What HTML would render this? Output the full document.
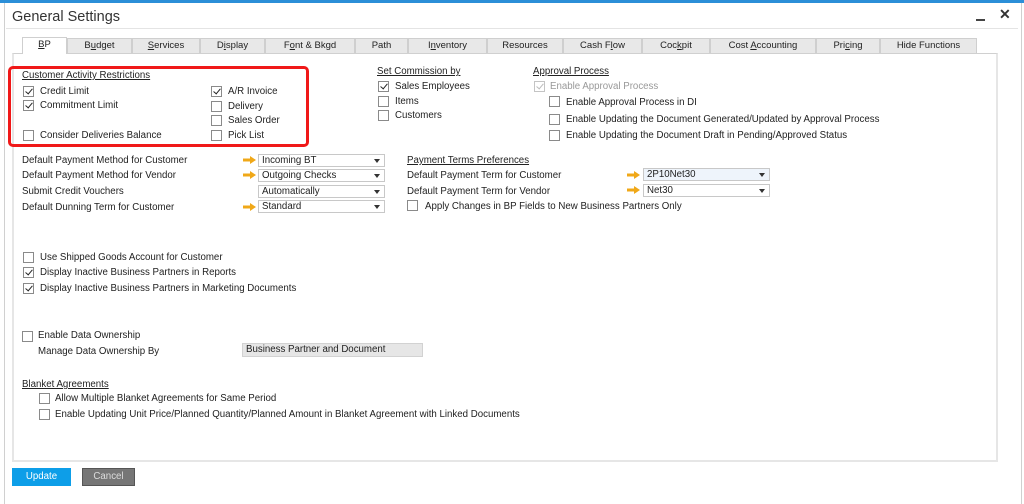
<!DOCTYPE html>
<html><head><meta charset="utf-8"><style>
*{margin:0;padding:0;box-sizing:border-box}
body{width:1024px;height:504px;background:#fff;font-family:"Liberation Sans",sans-serif;font-size:9.7px;color:#222;position:relative;overflow:hidden}
.a{position:absolute;white-space:nowrap}
.cb{position:absolute;width:11px;height:11px;border:1px solid #8a8a8a;background:#fff}
.cb.c::after{content:"";position:absolute;left:3px;top:0px;width:3px;height:6px;border:solid #222;border-width:0 1.5px 1.5px 0;transform:rotate(40deg)}
.cb.d{border-color:#c4c4c4}.cb.d::after{border-color:#bbb}
.u{text-decoration:underline}
.dd{position:absolute;height:13px;border:1px solid #c8c8c8;background:#fff;padding-left:3px;line-height:11px}
.dd::after{content:"";position:absolute;right:4px;top:4px;border:3.5px solid transparent;border-top:4px solid #333}
.arr{position:absolute;width:13px;height:8px}
.tab{position:absolute;top:38px;height:15px;background:#e8e8e8;border:1px solid #cfcfcf;border-bottom:none;text-align:center;line-height:14px;font-size:9.5px}
</style></head><body>
<div class="a" style="left:0;top:0;width:1024px;height:3px;background:#2b8fd8"></div>
<div class="a" style="left:4px;top:3px;width:1px;height:501px;background:#d0d0d0"></div>
<div class="a" style="left:1021px;top:3px;width:1px;height:501px;background:#d0d0d0"></div>
<div class="a" style="left:12px;top:9px;font-size:14.5px;color:#333">General Settings</div>
<div class="a" style="left:6px;top:28px;width:1012px;height:1px;background:#e4e4e4"></div>
<div class="a" style="left:976px;top:19px;width:9px;height:2px;background:#444"></div>
<div class="a" style="left:999px;top:6px;font-size:14px;font-weight:bold;color:#333">✕</div>

<div class="a" style="left:12px;top:53px;width:986px;height:409px;border:2px solid #e6e6e6;border-top:1px solid #d0d0d0"></div>
<div class="tab" style="left:22px;width:45px;top:37px;height:17px;background:#fff"><span class="u">B</span>P</div>
<div class="tab" style="left:67px;width:65px">B<span class="u">u</span>dget</div>
<div class="tab" style="left:132px;width:68px"><span class="u">S</span>ervices</div>
<div class="tab" style="left:200px;width:65px">D<span class="u">i</span>splay</div>
<div class="tab" style="left:265px;width:90px">F<span class="u">o</span>nt &amp; Bkgd</div>
<div class="tab" style="left:355px;width:53px">Path</div>
<div class="tab" style="left:408px;width:79px">I<span class="u">n</span>ventory</div>
<div class="tab" style="left:487px;width:76px">Resources</div>
<div class="tab" style="left:563px;width:79px">Cash F<span class="u">l</span>ow</div>
<div class="tab" style="left:642px;width:68px">Coc<span class="u">k</span>pit</div>
<div class="tab" style="left:710px;width:106px">Cost <span class="u">A</span>ccounting</div>
<div class="tab" style="left:816px;width:64px">Pri<span class="u">c</span>ing</div>
<div class="tab" style="left:880px;width:97px">Hide Functions</div>

<div class="a" style="left:8px;top:66px;width:301px;height:81px;border:3px solid #f01818;border-radius:5px"></div>
<div class="a u" style="left:22px;top:70px">Customer Activity Restrictions</div>
<div class="cb c" style="left:23px;top:86px"></div><div class="a" style="left:40px;top:86px">Credit Limit</div>
<div class="cb c" style="left:23px;top:100px"></div><div class="a" style="left:40px;top:100px">Commitment Limit</div>
<div class="cb" style="left:23px;top:130px"></div><div class="a" style="left:40px;top:130px">Consider Deliveries Balance</div>
<div class="cb c" style="left:211px;top:86px"></div><div class="a" style="left:228px;top:86px">A/R Invoice</div>
<div class="cb" style="left:211px;top:101px"></div><div class="a" style="left:228px;top:101px">Delivery</div>
<div class="cb" style="left:211px;top:115px"></div><div class="a" style="left:228px;top:115px">Sales Order</div>
<div class="cb" style="left:211px;top:130px"></div><div class="a" style="left:228px;top:130px">Pick List</div>

<div class="a u" style="left:377px;top:66px">Set Commission by</div>
<div class="cb c" style="left:378px;top:81px"></div><div class="a" style="left:395px;top:81px">Sales Employees</div>
<div class="cb" style="left:378px;top:96px"></div><div class="a" style="left:395px;top:96px">Items</div>
<div class="cb" style="left:378px;top:110px"></div><div class="a" style="left:395px;top:110px">Customers</div>

<div class="a u" style="left:533px;top:66px">Approval Process</div>
<div class="cb c d" style="left:534px;top:81px"></div><div class="a" style="left:550px;top:81px;color:#999">Enable Approval Process</div>
<div class="cb" style="left:549px;top:96px"></div><div class="a" style="left:566px;top:97px">Enable Approval Process in DI</div>
<div class="cb" style="left:549px;top:114px"></div><div class="a" style="left:566px;top:114px">Enable Updating the Document Generated/Updated by Approval Process</div>
<div class="cb" style="left:549px;top:130px"></div><div class="a" style="left:566px;top:130px">Enable Updating the Document Draft in Pending/Approved Status</div>

<svg width="0" height="0" style="position:absolute"><defs><symbol id="ar" viewBox="0 0 13 8"><path d="M0 2.5h7V0l6 4-6 4V5.5H0z" fill="#f0a818"/></symbol></defs></svg>
<div class="a" style="left:22px;top:155px">Default Payment Method for Customer</div>
<div class="a" style="left:22px;top:170px">Default Payment Method for Vendor</div>
<div class="a" style="left:22px;top:186px">Submit Credit Vouchers</div>
<div class="a" style="left:22px;top:202px">Default Dunning Term for Customer</div>
<svg class="arr" style="left:243px;top:156px"><use href="#ar"/></svg>
<svg class="arr" style="left:243px;top:171px"><use href="#ar"/></svg>
<svg class="arr" style="left:243px;top:203px"><use href="#ar"/></svg>
<div class="dd" style="left:258px;top:154px;width:127px">Incoming BT</div>
<div class="dd" style="left:258px;top:169px;width:127px">Outgoing Checks</div>
<div class="dd" style="left:258px;top:185px;width:127px">Automatically</div>
<div class="dd" style="left:258px;top:200px;width:127px">Standard</div>

<div class="a u" style="left:407px;top:155px">Payment Terms Preferences</div>
<div class="a" style="left:407px;top:170px">Default Payment Term for Customer</div>
<div class="a" style="left:407px;top:186px">Default Payment Term for Vendor</div>
<div class="cb" style="left:407px;top:200px"></div><div class="a" style="left:425px;top:201px">Apply Changes in BP Fields to New Business Partners Only</div>
<svg class="arr" style="left:627px;top:171px"><use href="#ar"/></svg>
<svg class="arr" style="left:627px;top:186px"><use href="#ar"/></svg>
<div class="dd" style="left:643px;top:168px;width:127px;background:#eef4fb">2P10Net30</div>
<div class="dd" style="left:643px;top:184px;width:127px">Net30</div>

<div class="cb" style="left:23px;top:252px"></div><div class="a" style="left:40px;top:252px">Use Shipped Goods Account for Customer</div>
<div class="cb c" style="left:23px;top:267px"></div><div class="a" style="left:40px;top:267px">Display Inactive Business Partners in Reports</div>
<div class="cb c" style="left:23px;top:283px"></div><div class="a" style="left:40px;top:283px">Display Inactive Business Partners in Marketing Documents</div>

<div class="cb" style="left:22px;top:331px"></div><div class="a" style="left:38px;top:330px">Enable Data Ownership</div>
<div class="a" style="left:38px;top:346px">Manage Data Ownership By</div>
<div class="a" style="left:242px;top:343px;width:181px;height:14px;background:#e6e6e6;border:1px solid #d2d2d2;padding-left:3px;line-height:12px">Business Partner and Document</div>

<div class="a u" style="left:22px;top:379px">Blanket Agreements</div>
<div class="cb" style="left:39px;top:393px"></div><div class="a" style="left:55px;top:393px">Allow Multiple Blanket Agreements for Same Period</div>
<div class="cb" style="left:39px;top:409px"></div><div class="a" style="left:55px;top:409px">Enable Updating Unit Price/Planned Quantity/Planned Amount in Blanket Agreement with Linked Documents</div>

<div class="a" style="left:12px;top:468px;width:59px;height:18px;background:#0d9ee8;color:#fff;text-align:center;line-height:17px">Update</div>
<div class="a" style="left:82px;top:468px;width:53px;height:18px;background:#767676;border:1px solid #555;color:#ddd;text-align:center;line-height:16px">Cancel</div>
</body></html>
